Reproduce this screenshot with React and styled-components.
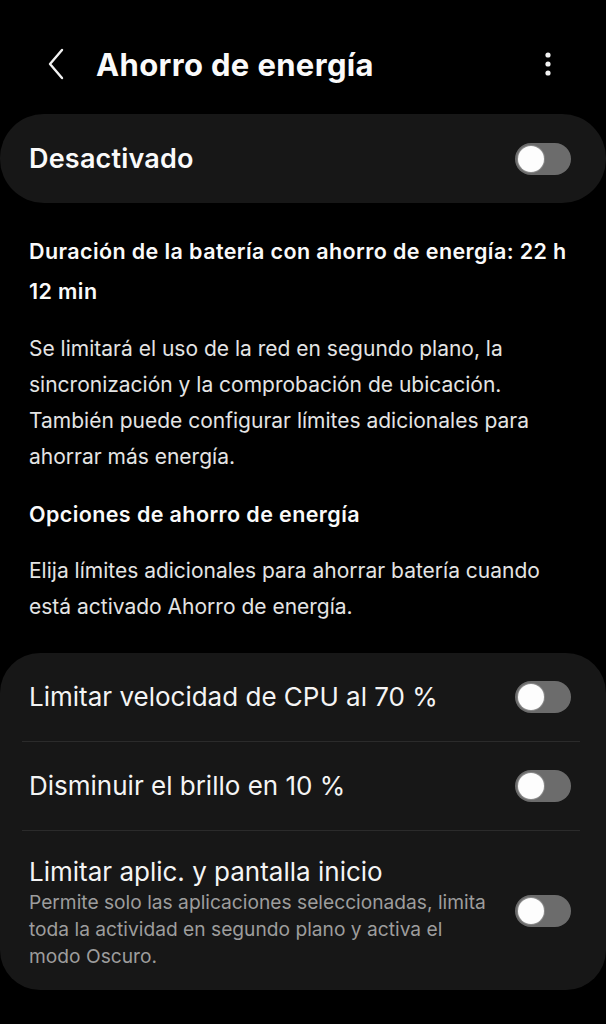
import React from "react";
import styled, { createGlobalStyle } from "styled-components";

const Global = createGlobalStyle`
  html, body { margin: 0; padding: 0; background: #000; }
  body { font-family: Inter, Roboto, "Noto Sans", sans-serif; color: #fafafa; -webkit-font-smoothing: antialiased; }
`;

const Page = styled.div`
  width: 606px;
  min-height: 1024px;
  background: #000;
  display: flex;
  flex-direction: column;
`;

const Header = styled.header`
  height: 100px;
  margin-top: 14px;
  display: flex;
  align-items: center;
  padding: 0 46px 0 44px;
  box-sizing: border-box;
`;

const IconButton = styled.div`
  width: 24px;
  height: 34px;
  display: flex;
  align-items: center;
  justify-content: center;
`;

const Title = styled.h1`
  flex: 1;
  margin: 0 0 0 28px;
  font-size: 31px;
  font-weight: 700;
  letter-spacing: 0.35px;
  color: #fafafa;
`;

const Card = styled.section`
  background: #171717;
  border-radius: ${(p) => p.$radius || 40}px;
  display: flex;
  flex-direction: column;
`;

const MasterRow = styled.div`
  height: 89px;
  display: flex;
  align-items: center;
  justify-content: space-between;
  padding: 0 35px 0 29px;
  font-size: 27px;
  font-weight: 600;
  letter-spacing: 0.2px;
`;

const Info = styled.div`
  padding: 28px 30px 28px 29px;
  display: flex;
  flex-direction: column;
`;

const Heading = styled.p`
  margin: ${(p) => p.$mt || 0}px 0 0;
  font-size: 21.5px;
  font-weight: 600;
  letter-spacing: 0.4px;
  line-height: ${(p) => p.$lh || 36}px;
  color: #fafafa;
`;

const Body = styled.p`
  margin: ${(p) => p.$mt || 0}px 0 0;
  font-size: 21px;
  line-height: 36px;
  color: #e4e4e4;
`;

const Row = styled.div`
  display: flex;
  align-items: center;
  justify-content: space-between;
  gap: 20px;
  padding: ${(p) => (p.$tall ? "24px 35px 20px 29px" : "0 35px 0 29px")};
  height: ${(p) => (p.$tall ? "auto" : "88px")};
`;

const RowText = styled.div`
  display: flex;
  flex-direction: column;
  flex: 1;
`;

const RowTitle = styled.div`
  font-size: 26px;
  line-height: 34px;
  color: #f4f4f4;
`;

const RowSub = styled.div`
  font-size: 19.2px;
  line-height: 27px;
  color: #9d9d9d;
`;

const Divider = styled.div`
  height: 1px;
  background: #2b2b2b;
  margin: 0 26px 0 22px;
`;

const Track = styled.div`
  width: 56px;
  height: 32px;
  border-radius: 16px;
  background: #6c6c6c;
  flex-shrink: 0;
  display: flex;
  align-items: center;
  padding-left: 3px;
  box-sizing: border-box;
  align-self: ${(p) => p.$self || "center"};
  margin-top: ${(p) => p.$mt || 0}px;
`;

const Knob = styled.div`
  width: 26px;
  height: 26px;
  border-radius: 50%;
  background: #fdfdfd;
  box-shadow: 0 0 0 1px #8a8a8a;
`;

const Toggle = (props) => (
  <Track {...props}>
    <Knob />
  </Track>
);

const Back = () => (
  <svg width="20" height="32" viewBox="0 0 20 32">
    <path d="M16 2 L4 16 L16 30" fill="none" stroke="#f2f2f2" strokeWidth="2.4" strokeLinecap="round" strokeLinejoin="round" />
  </svg>
);

const Kebab = () => (
  <svg width="8" height="28" viewBox="0 0 8 28">
    <circle cx="4" cy="5" r="2.6" fill="#f2f2f2" />
    <circle cx="4" cy="14" r="2.6" fill="#f2f2f2" />
    <circle cx="4" cy="23" r="2.6" fill="#f2f2f2" />
  </svg>
);

export default function App() {
  return (
    <Page>
      <Global />
      <Header>
        <IconButton><Back /></IconButton>
        <Title>Ahorro de energía</Title>
        <IconButton><Kebab /></IconButton>
      </Header>

      <Card $radius={44}>
        <MasterRow>
          <span>Desactivado</span>
          <Toggle />
        </MasterRow>
      </Card>

      <Info>
        <Heading $lh={40}>
          Duración de la batería con ahorro de energía: 22 h 12 min
        </Heading>
        <Body $mt={20}>
          Se limitará el uso de la red en segundo plano, la sincronización y la
          comprobación de ubicación. También puede configurar límites adicionales
          para ahorrar más energía.
        </Body>
        <Heading $mt={21}>Opciones de ahorro de energía</Heading>
        <Body $mt={21}>
          Elija límites adicionales para ahorrar batería cuando está activado
          Ahorro de energía.
        </Body>
      </Info>

      <Card>
        <Row>
          <RowTitle>Limitar velocidad de CPU al 70 %</RowTitle>
          <Toggle />
        </Row>
        <Divider />
        <Row>
          <RowTitle>Disminuir el brillo en 10 %</RowTitle>
          <Toggle />
        </Row>
        <Divider />
        <Row $tall>
          <RowText>
            <RowTitle>Limitar aplic. y pantalla inicio</RowTitle>
            <RowSub>
              Permite solo las aplicaciones seleccionadas, limita toda la
              actividad en segundo plano y activa el modo Oscuro.
            </RowSub>
          </RowText>
          <Toggle $self="flex-start" $mt={40} />
        </Row>
      </Card>
    </Page>
  );
}
